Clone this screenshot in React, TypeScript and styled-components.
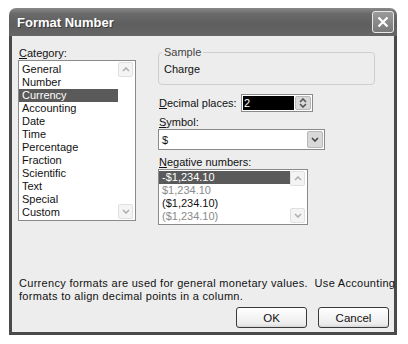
import React from 'react';
import styled, { createGlobalStyle } from 'styled-components';

const GlobalStyle = createGlobalStyle`
  body {
    margin: 0;
    background: #ffffff;
    font-family: "Liberation Sans", Arial, sans-serif;
  }
`;

const Window = styled.div`
  margin: 8px 0 0 9px;
  width: 388px;
  height: 327px;
  display: flex;
  flex-direction: column;
`;

const TitleBar = styled.div`
  height: 28px;
  border-radius: 7px 7px 0 0;
  background: linear-gradient(#8a8a8a 0%, #6a6a6a 20%, #5e5e5e 60%, #666 100%);
  display: flex;
  align-items: center;
  justify-content: space-between;
  padding: 0 3px 0 8px;
`;

const Title = styled.span`
  color: #ffffff;
  font-weight: bold;
  font-size: 13px;
  text-shadow: 1px 1px 0 #3a3a3a;
`;

const CloseButton = styled.div`
  width: 20px;
  height: 20px;
  border: 1px solid #e8e8e8;
  border-radius: 3px;
  background: linear-gradient(#9a9a9a, #7a7a7a);
  display: flex;
  align-items: center;
  justify-content: center;
`;

const Body = styled.div`
  flex: 1;
  background: #ededed;
  border: 3px solid #4a4a4a;
  border-top: none;
  padding: 11px 5px 4px 6px;
  display: flex;
  flex-direction: column;
  font-size: 11px;
  color: #111;
`;

const Main = styled.div`
  display: flex;
  gap: 22px;
`;

const Column = styled.div<{ width?: number }>`
  display: flex;
  flex-direction: column;
  width: ${(p) => (p.width ? `${p.width}px` : 'auto')};
`;

const Label = styled.div<{ top?: number; width?: number }>`
  line-height: 13px;
  margin-top: ${(p) => p.top || 0}px;
  width: ${(p) => (p.width ? `${p.width}px` : 'auto')};
  padding-left: 1px;
  white-space: nowrap;
`;

const ListBox = styled.div<{ width: number; height: number }>`
  width: ${(p) => p.width}px;
  height: ${(p) => p.height}px;
  box-sizing: border-box;
  border: 1px solid #8a8a8a;
  background: #ffffff;
  display: flex;
`;

const Items = styled.div<{ top?: number }>`
  flex: 1;
  padding-top: ${(p) => (p.top === undefined ? 2 : p.top)}px;
`;

const Item = styled.div<{ selected?: boolean; faded?: boolean }>`
  line-height: 13px;
  padding-left: 3px;
  background: ${(p) => (p.selected ? '#5a5a5a' : 'transparent')};
  color: ${(p) => (p.selected ? '#ffffff' : p.faded ? '#8a8a8a' : '#111')};
`;

const ScrollBar = styled.div`
  width: 16px;
  display: flex;
  flex-direction: column;
  justify-content: space-between;
  padding: 1px 1px 1px 0;
`;

const ArrowButton = styled.div<{ dark?: boolean }>`
  width: ${(p) => (p.dark ? 16 : 15)}px;
  height: ${(p) => (p.dark ? 17 : 15)}px;
  box-sizing: border-box;
  border: 1px solid ${(p) => (p.dark ? '#b8b8b8' : '#e0e0e0')};
  border-radius: 2px;
  background: ${(p) => (p.dark ? '#d8d8d8' : '#f4f4f4')};
  display: flex;
  align-items: center;
  justify-content: center;
`;

const Group = styled.div`
  position: relative;
  width: 217px;
  height: 33px;
  box-sizing: border-box;
  border: 1px solid #cfcfcf;
  border-radius: 4px;
  margin-top: 5px;
  padding: 10px 0 0 4px;
`;

const Legend = styled.span`
  position: absolute;
  top: -7px;
  left: 3px;
  padding: 0 2px;
  background: #ededed;
  color: #444;
  line-height: 13px;
`;

const Row = styled.div`
  display: flex;
  align-items: center;
  margin-top: 9px;
`;

const SpinBox = styled.div`
  width: 72px;
  height: 18px;
  box-sizing: border-box;
  border: 1px solid #8a8a8a;
  background: #ffffff;
  display: flex;
  padding: 1px;
`;

const SpinField = styled.div`
  flex: 1;
  background: #000000;
  color: #ffffff;
  line-height: 14px;
  padding-left: 1px;
  margin-right: 1px;
`;

const SpinButtons = styled.div`
  width: 14px;
  border: 1px solid #b8b8b8;
  border-radius: 2px;
  background: #d8d8d8;
  display: flex;
  flex-direction: column;
  align-items: center;
  justify-content: center;
`;

const Select = styled.div`
  width: 167px;
  height: 21px;
  box-sizing: border-box;
  border: 1px solid #8a8a8a;
  background: #ffffff;
  display: flex;
  align-items: center;
  padding: 1px;
`;

const SelectValue = styled.div`
  flex: 1;
  padding-left: 2px;
`;

const Description = styled.div`
  margin-top: auto;
  padding-left: 1px;
  line-height: 13px;
  letter-spacing: 0.3px;
  white-space: nowrap;
`;

const Buttons = styled.div`
  display: flex;
  justify-content: flex-end;
  gap: 11px;
  margin-top: 4px;
`;

const Button = styled.div`
  width: 71px;
  height: 21px;
  box-sizing: border-box;
  border: 1px solid #3a3a3a;
  border-radius: 3px;
  background: linear-gradient(#ffffff, #ececec 85%, #d6d6d6);
  display: flex;
  align-items: center;
  justify-content: center;
  font-size: 11.5px;
`;

const U = styled.span`
  text-decoration: underline;
`;

const Chevron = ({ up, color = '#b0b0b0' }: { up?: boolean; color?: string }) => (
  <svg width="8" height="5" viewBox="0 0 8 5">
    <path
      d={up ? 'M1 4 L4 1 L7 4' : 'M1 1 L4 4 L7 1'}
      fill="none"
      stroke={color}
      strokeWidth="1.6"
    />
  </svg>
);

const categories = [
  'General', 'Number', 'Currency', 'Accounting', 'Date', 'Time',
  'Percentage', 'Fraction', 'Scientific', 'Text', 'Special', 'Custom',
];

const negatives = [
  { text: '-$1,234.10', selected: true },
  { text: '$1,234.10', faded: true },
  { text: '($1,234.10)' },
  { text: '($1,234.10)', faded: true },
];

export default function App() {
  return (
    <>
      <GlobalStyle />
      <Window>
        <TitleBar>
          <Title>Format Number</Title>
          <CloseButton>
            <svg width="12" height="12" viewBox="0 0 12 12">
              <path d="M1.5 1.5 L10.5 10.5 M10.5 1.5 L1.5 10.5" stroke="#fff" strokeWidth="2.2" />
            </svg>
          </CloseButton>
        </TitleBar>
        <Body>
          <Main>
            <Column width={118}>
              <Label><U>C</U>ategory:</Label>
              <ListBox width={118} height={161}>
                <Items>
                  {categories.map((c) => (
                    <Item key={c} selected={c === 'Currency'}>{c}</Item>
                  ))}
                </Items>
                <ScrollBar>
                  <ArrowButton><Chevron up /></ArrowButton>
                  <ArrowButton><Chevron /></ArrowButton>
                </ScrollBar>
              </ListBox>
            </Column>
            <Column>
              <Group>
                <Legend>Sample</Legend>
                <Label>Charge</Label>
              </Group>
              <Row>
                <Label width={82}><U>D</U>ecimal places:</Label>
                <SpinBox>
                  <SpinField>2</SpinField>
                  <SpinButtons>
                    <Chevron up color="#555" />
                    <Chevron color="#555" />
                  </SpinButtons>
                </SpinBox>
              </Row>
              <Label top={4}><U>S</U>ymbol:</Label>
              <Select>
                <SelectValue>$</SelectValue>
                <ArrowButton dark>
                  <Chevron color="#444" />
                </ArrowButton>
              </Select>
              <Label top={6}><U>N</U>egative numbers:</Label>
              <ListBox width={150} height={56}>
                <Items top={1}>
                  {negatives.map((n, i) => (
                    <Item key={i} selected={n.selected} faded={n.faded}>{n.text}</Item>
                  ))}
                </Items>
                <ScrollBar>
                  <ArrowButton><Chevron up /></ArrowButton>
                  <ArrowButton><Chevron /></ArrowButton>
                </ScrollBar>
              </ListBox>
            </Column>
          </Main>
          <Description>
            Currency formats are used for general monetary values.&nbsp; Use Accounting
            <br />
            formats to align decimal points in a column.
          </Description>
          <Buttons>
            <Button>OK</Button>
            <Button>Cancel</Button>
          </Buttons>
        </Body>
      </Window>
    </>
  );
}
